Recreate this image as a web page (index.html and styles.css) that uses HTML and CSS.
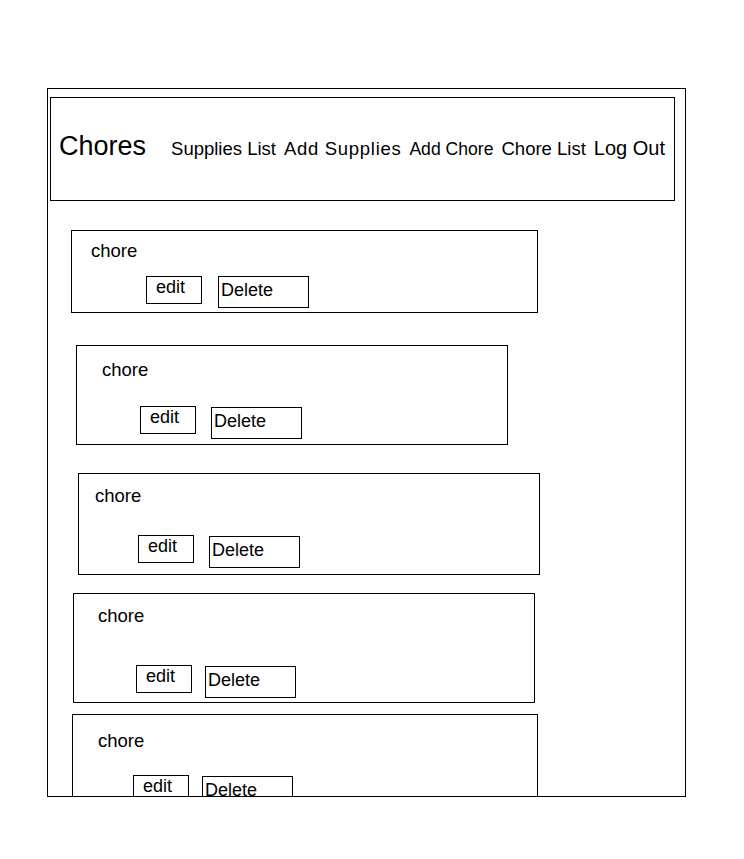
FILE: index.html
```html
<!DOCTYPE html>
<html lang="en">
<head>
<meta charset="utf-8">
<title>Chores</title>
<link rel="stylesheet" href="styles.css">
</head>
<body>
<div class="frame">
  <header class="header">
    <h1 class="brand">Chores</h1>
    <nav class="nav">
      <a class="nav-link">Supplies List</a>
      <a class="nav-link nav-link--wide">Add Supplies</a>
      <a class="nav-link nav-link--sm">Add Chore</a>
      <a class="nav-link">Chore List</a>
      <a class="nav-link nav-link--lg">Log Out</a>
    </nav>
  </header>
  <main class="list">
    <section class="card card--1">
      <div class="card__title">chore</div>
      <div class="card__actions"><button class="btn btn--edit">edit</button><button class="btn btn--delete">Delete</button></div>
    </section>
    <section class="card card--2">
      <div class="card__title">chore</div>
      <div class="card__actions"><button class="btn btn--edit">edit</button><button class="btn btn--delete">Delete</button></div>
    </section>
    <section class="card card--3">
      <div class="card__title">chore</div>
      <div class="card__actions"><button class="btn btn--edit">edit</button><button class="btn btn--delete">Delete</button></div>
    </section>
    <section class="card card--4">
      <div class="card__title">chore</div>
      <div class="card__actions"><button class="btn btn--edit">edit</button><button class="btn btn--delete">Delete</button></div>
    </section>
    <section class="card card--5">
      <div class="card__title">chore</div>
      <div class="card__actions"><button class="btn btn--edit">edit</button><button class="btn btn--delete">Delete</button></div>
    </section>
  </main>
</div>
</body>
</html>
```
FILE: styles.css
```css
html, body {
  margin: 0;
  padding: 0;
  background: #fff;
}

body {
  font-family: "Liberation Sans", Arial, sans-serif;
  color: #000;
}

.frame {
  box-sizing: border-box;
  width: 639px;
  height: 709px;
  margin: 88px 0 0 47px;
  border: 1px solid #000;
  overflow: hidden;
}

.header {
  box-sizing: border-box;
  display: flex;
  align-items: baseline;
  width: 625px;
  height: 104px;
  margin: 8px 0 0 2px;
  padding: 33px 0 0 8px;
  border: 1px solid #000;
}

.brand {
  margin: 0 25px 0 0;
  font-size: 27px;
  line-height: 30px;
  font-weight: normal;
}

.nav {
  display: flex;
  align-items: baseline;
  gap: 8px;
}

.nav-link {
  font-size: 18.5px;
  line-height: 22px;
  color: #000;
  white-space: nowrap;
}

.nav-link--wide {
  letter-spacing: 0.7px;
}

.nav-link--sm {
  font-size: 17.6px;
}

.nav-link--lg {
  font-size: 20px;
}

.list {
  display: block;
}

.card {
  box-sizing: border-box;
  width: var(--w);
  height: var(--h);
  margin: var(--mt) 0 0 var(--ml);
  border: 1px solid #000;
}

.card__title {
  margin: var(--tt) 0 0 var(--tl);
  font-size: 18.5px;
  line-height: 20px;
}

.card__actions {
  display: flex;
  align-items: flex-start;
  gap: var(--gap);
  margin-top: var(--at);
  padding-left: var(--al);
}

.btn {
  box-sizing: border-box;
  margin: 0;
  border: 1px solid #000;
  border-radius: 0;
  background: #fff;
  color: #000;
  font-family: inherit;
  font-size: 18px;
  line-height: 20px;
  text-align: left;
  cursor: pointer;
}

.btn--edit {
  width: 56px;
  height: 28px;
  padding: 0 0 6px 9px;
}

.btn--delete {
  width: 91px;
  height: 32px;
  padding: 3px 0 7px 2px;
  margin-top: var(--dt);
}

.card--1 { --w: 467px; --h: 83px;  --mt: 29px; --ml: 23px; --tt: 10px; --tl: 19px; --at: 15px; --al: 74px; --gap: 16px; --dt: 0px; }
.card--2 { --w: 432px; --h: 100px; --mt: 32px; --ml: 28px; --tt: 14px; --tl: 25px; --at: 26px; --al: 63px; --gap: 15px; --dt: 1px; }
.card--3 { --w: 462px; --h: 102px; --mt: 28px; --ml: 30px; --tt: 12px; --tl: 16px; --at: 29px; --al: 59px; --gap: 15px; --dt: 1px; }
.card--4 { --w: 462px; --h: 110px; --mt: 18px; --ml: 25px; --tt: 12px; --tl: 24px; --at: 39px; --al: 62px; --gap: 13px; --dt: 1px; }
.card--5 { --w: 466px; --h: 120px; --mt: 11px; --ml: 24px; --tt: 16px; --tl: 25px; --at: 24px; --al: 60px; --gap: 13px; --dt: 1px; }
```
